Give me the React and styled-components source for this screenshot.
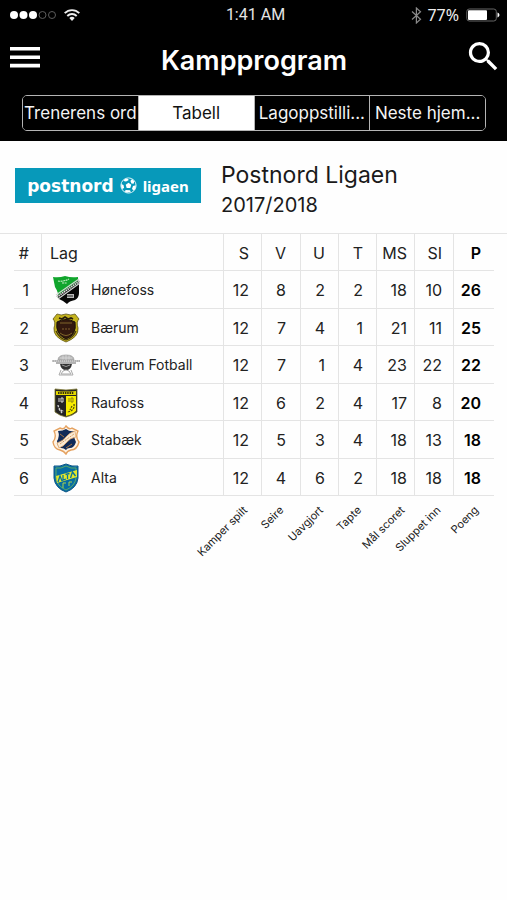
import React from "react";
import styled, { createGlobalStyle, css } from "styled-components";
import { MdSearch } from "react-icons/md";

const GlobalStyle = createGlobalStyle`
  * { box-sizing: border-box; }
  body {
    margin: 0;
    background: #fefefe;
    color: #1a1a1a;
    font-family: Inter, "Liberation Sans", sans-serif;
  }
`;

const Header = styled.header`
  background: #000;
  color: #fff;
  padding-bottom: 10px;
`;

const StatusBar = styled.div`
  display: grid;
  grid-template-columns: 1fr auto 1fr;
  align-items: center;
  height: 30px;
  padding: 0 6px 0 10px;
`;

const StatusGroup = styled.div`
  display: flex;
  align-items: center;
  gap: ${(p) => p.$gap}px;
  justify-content: ${(p) => (p.$end ? "flex-end" : "flex-start")};
`;

const Clock = styled.time`
  font: 400 16px/20px Roboto, sans-serif;
  color: #e4e4e4;
`;

const BatteryText = styled.span`
  font: 400 16px/20px "Noto Sans", sans-serif;
  color: #eee;
  margin-right: 2px;
`;

const NavBar = styled.div`
  display: grid;
  grid-template-columns: 44px 1fr 44px;
  height: 65px;
  padding: 0 2px 0 3px;
`;

const IconButton = styled.button`
  display: flex;
  justify-content: center;
  align-items: flex-start;
  padding: ${(p) => p.$top}px 0 0;
  border: 0;
  background: none;
  color: #fff;
`;

const Title = styled.h1`
  margin: 0;
  padding-top: 14px;
  text-align: center;
  font-size: 27px;
  line-height: 34px;
  font-weight: 600;
`;

const Segments = styled.nav`
  display: flex;
  height: 36px;
  margin: 0 21px 0 22px;
  border: 1px solid #b4b4b4;
  border-radius: 5px;
  overflow: hidden;
`;

const Segment = styled.button`
  flex: 1 1 0;
  min-width: 0;
  padding: 0;
  border: 0;
  overflow: hidden;
  white-space: nowrap;
  font: 400 17px/34px Inter, sans-serif;
  background: ${(p) => (p.$active ? "#fff" : "#000")};
  color: ${(p) => (p.$active ? "#111" : "#f4f4f4")};
  & + & { border-left: 1px solid #b4b4b4; }
`;

const League = styled.section`
  display: flex;
  align-items: flex-start;
  gap: 20px;
  height: 92px;
  padding: 19px 15px 0;
`;

const Banner = styled.div`
  display: flex;
  align-items: center;
  justify-content: center;
  gap: 6px;
  width: 186px;
  height: 35px;
  margin-top: 8px;
  background: #0799ba;
  color: #fff;
`;

const BrandName = styled.span`
  font: 700 17px/20px "DejaVu Sans", sans-serif;
`;

const BrandLeague = styled.span`
  font: 700 15px/20px "Noto Sans", sans-serif;
`;

const LeagueName = styled.h2`
  margin: 0;
  font-size: 23px;
  line-height: 30px;
  font-weight: 400;
`;

const Season = styled.p`
  margin: 0;
  font-size: 20px;
  line-height: 30px;
`;

const TableFrame = styled.main`
  border-top: 1px solid #e4e4e4;
  padding: 0 13px 0 14px;
`;

const Table = styled.table`
  width: 100%;
  table-layout: fixed;
  border-collapse: separate;
  border-spacing: 0;
  font-size: 16px;
  line-height: 20px;
`;

const Col = styled.col`
  width: ${(p) => (p.$w ? `${p.$w}px` : "auto")};
`;

const cell = css`
  padding: 1px ${(p) => p.$pad ?? 14}px 0 0;
  text-align: right;
  font-weight: ${(p) => (p.$bold ? 600 : 400)};
  color: ${(p) => (p.$bold ? "#000" : "#222")};
  border-bottom: 1px solid #e4e4e4;
  border-right: ${(p) => (p.$last ? "0" : "1px solid #e4e4e4")};
`;

const Row = styled.tr`
  height: 37px;
  &:nth-child(odd) { height: ${(p) => (p.$head ? 37 : 38)}px; }
`;

const HeadCell = styled.th`
  ${cell}
`;

const NumberCell = styled.td`
  ${cell}
`;

const TeamHeadCell = styled.th`
  ${cell}
  padding: 1px 8px 0;
  text-align: left;
`;

const TeamCell = styled.td`
  ${cell}
  padding: 1px 0 0 10px;
`;

const Team = styled.div`
  display: flex;
  align-items: center;
  gap: 11px;
  font-size: 14px;
`;

const LegendCell = styled.td`
  padding: 0 ${(p) => p.$pad}px 0 0;
  height: 70px;
  vertical-align: top;
`;

const LegendLabel = styled.div`
  display: flex;
  justify-content: flex-end;
  padding: 5px 5px 0 0;
`;

const Slanted = styled.span`
  flex: none;
  white-space: nowrap;
  font-size: 11px;
  line-height: 14px;
  transform: rotate(-45deg);
  transform-origin: 100% 50%;
`;

const SignalIcon = () => (
  <svg width="46" height="10" viewBox="0 0 46 10" aria-hidden="true">
    {[4, 13.5, 23].map((x) => <circle key={x} cx={x} cy="5" r="4" fill="#fff" />)}
    {[32.5, 42].map((x) => <circle key={x} cx={x} cy="5" r="3.5" fill="none" stroke="#5c5c5c" />)}
  </svg>
);

const WifiIcon = () => (
  <svg width="16" height="12" viewBox="0 0 16 12" fill="none" stroke="#eee" strokeWidth="1.9" aria-hidden="true">
    <path d="M.7 4.2C4.8.1 11.2.1 15.3 4.2" />
    <path d="M3.3 7C6 4.4 10 4.4 12.7 7" />
    <path d="M8 12 5.3 9.1a4 4 0 0 1 5.4 0z" fill="#eee" stroke="none" />
  </svg>
);

const BluetoothIcon = () => (
  <svg width="11" height="17" viewBox="0 0 11 17" fill="none" stroke="#8a8a8a" strokeWidth="1.2" aria-hidden="true">
    <path d="M1 4.5 9.5 12.3 5.4 16V1l4.1 3.7L1 12.5" />
  </svg>
);

const BatteryIcon = () => (
  <svg width="35" height="14" viewBox="0 0 35 14" aria-hidden="true">
    <rect x=".8" y="1" width="29.5" height="12" rx="2.5" fill="none" stroke="#666" />
    <rect x="2" y="2.2" width="19" height="9.8" rx="1" fill="#fff" />
    <path d="M31.5 4.6c2.6.8 2.6 4 0 4.8z" fill="#fff" />
  </svg>
);

const MenuIcon = () => (
  <svg width="30" height="21" viewBox="0 0 30 21" fill="#fff" aria-hidden="true">
    <path d="M0 0h30v3.6H0zM0 8.4h30V12H0zM0 16.8h30v3.6H0z" />
  </svg>
);

const BallIcon = () => (
  <svg width="17" height="17" viewBox="0 0 17 17" aria-hidden="true">
    <circle cx="8.5" cy="8.5" r="7.6" fill="#0799ba" stroke="#d8f2f7" strokeWidth="1" />
    <path d="m8.5 5.8 2.8 2-1 3.3H6.7l-1-3.3zM5 1.8l3.3.1.2 1.4L6 4.6 3.6 4zM12 2l2.4 2.6-.8 2.2-2.2-.4-1-2.4zM1.2 7l2.3 1 .6 3-2 1A8 8 0 0 1 1.2 7zM15.9 8.2l-.6 4-2 1.3-1.3-1.7 1-2.9zM5.5 13l4.5.2.8 1.5A8 8 0 0 1 5 15z" fill="#fff" />
  </svg>
);

const Crest = ({ children, label }) => (
  <svg width="28" height="30" viewBox="0 0 28 30" role="img" aria-label={label}>{children}</svg>
);

const HonefossCrest = () => (
  <Crest label="Hønefoss">
    <path d="M1 2Q7 3 13 1q6 2 13 1v9L6 23Q7 18 3 12z" fill="#10a52c" />
    <path d="M27 8v10q0 5-4 7-6 1-8 4-3-3-8-5l-1-3z" fill="#080808" />
    <path d="m4 20 23-16M6 24 28 8" stroke="#d5d5d5" strokeWidth="1.1" />
    <path d="M5 22 27.5 6" stroke="#555" strokeWidth="2" />
    <path d="M5 22 27.5 6" stroke="#eee" strokeWidth="1.8" strokeDasharray="1 1.2" />
    <path d="M6 6q5 1 11-2M10 8h5" stroke="#c5f0c5" strokeWidth="1.1" fill="none" strokeDasharray="2 .6" />
    <path d="M15 19h7v4h-7z" fill="#bbb" /><path d="M16 20v2m2-2v2m2-2v2" stroke="#222" />
  </Crest>
);

const BaerumCrest = () => (
  <Crest label="Bærum">
    <path d="M5 1q4 2 9 0 5 2 9 0l4 5q-3 3-1 9 1 9-12 14Q1 24 2 15 4 9 1 6z" fill="#c4b31d" stroke="#5e5417" strokeWidth=".8" />
    <path d="M5 9q9-5 18 0 2 13-9 17Q3 21 5 9z" fill="#33190e" stroke="#17100b" />
    <path d="m7 5 3 1 3-2 3 2 3-1 2 1" fill="none" stroke="#251b0b" strokeWidth="1.8" />
    <path d="M8 10h12M8 20q6 5 12 0" fill="none" stroke="#80662a" />
    <path d="M10 16h8" stroke="#80612f" strokeDasharray="2 1" />
    <path d="M4 18q4 8 10 9 7-2 10-9" fill="none" stroke="#3e3012" strokeWidth="1.2" />
  </Crest>
);

const ElverumCrest = () => (
  <Crest label="Elverum Fotball">
    <path d="M6 10q0-5 8-5t8 5z" fill="#b8b8b8" stroke="#999" strokeWidth=".7" />
    <path d="M8 8h12M11 5.5v4M14 5v5M17 5.5v4" stroke="#ddd" strokeWidth=".7" />
    <path d="M0 11h28M4 13h20" stroke="#999" strokeWidth="1.5" />
    <path d="M0 11h28" stroke="#ddd" strokeDasharray="1 1" />
    <path d="M8 14h12q-1 6-6 6t-6-6z" fill="#333" />
    <path d="M10 15q4 3 8 0" stroke="#999" fill="none" />
    <path d="m9 20-2 5h14l-2-5m-8 1q3-2 6 0l2 3H9z" fill="none" stroke="#aaa" />
  </Crest>
);

const RaufossCrest = () => (
  <Crest label="Raufoss">
    <path d="M3 1q11 2 22 0v23q-5 4-11 5-6-1-11-5z" fill="#242424" stroke="#77712b" strokeWidth=".8" />
    <path d="M14 8h10v15q-4 4-10 5z" fill="#f8ed00" />
    <path d="M4 3q10 1 20 0v4H4z" fill="#e5d900" />
    <path d="M6 5h16" stroke="#37330d" strokeWidth="2" strokeDasharray="1.5 .8" />
    <path d="M7 10v4m2-4h2v4H9z" stroke="#ddd" fill="none" />
    <path d="M17 10v4m2-4h2v4h-2z" stroke="#8b8212" fill="none" />
    <path d="M6 17q1 6 6 6M7 21l3 4" stroke="#d4d4d4" strokeWidth="1.3" fill="none" strokeDasharray="2 1" />
    <path d="M22 16q1 7-7 8M20 18l-2 4" stroke="#55500c" strokeWidth="1.3" fill="none" strokeDasharray="2 1" />
  </Crest>
);

const StabaekCrest = () => (
  <Crest label="Stabæk">
    <path d="M14 1q3 4 6 2l6 3q-3 6 1 11-2 8-8 8-4 1-5 4-2-3-6-4-6-1-7-8 4-5 1-11l6-3q4 2 6-2z" fill="#fff2e2" stroke="#e5a260" strokeWidth="1.4" />
    <path d="M14 4q4 3 8 2-1 5 2 11-2 6-6 6-3 0-4 2-2-2-5-2-4-1-4-7 3-5 1-10 5 0 8-2z" fill="#102a58" />
    <path d="M5 18q6-2 9-6t9-6l1 6q-6 1-9 5t-8 6z" fill="#f9ead5" stroke="#e4a869" strokeWidth=".8" />
    <path d="m8 19 14-10" stroke="#d79d64" strokeDasharray="2 1" />
    <path d="m14 23 6-4M8 9l4 3" stroke="#a97543" />
  </Crest>
);

const AltaCrest = () => (
  <Crest label="Alta">
    <path d="M2 3q6 1 12-2 6 3 12 2v12q-1 10-12 14Q3 25 2 15z" fill="#076da2" stroke="#0b5687" />
    <path d="M4 5q5 1 10-2 5 3 10 2v10q-1 8-10 12Q5 23 4 15z" fill="none" stroke="#62af62" strokeWidth=".9" />
    <path d="m4 13 21-6v7L5 20z" fill="#e2e82c" />
    <path d="m6 19 2-6 2 5M11 12v5l3-1M13.500 11.500l4-1m-2 .500v5m3-1 2-6 3 4" fill="none" stroke="#08749b" strokeWidth="1.300" />
    <path d="M11 20v5m0-5h3M17 19v4m0-4h3" stroke="#acd44d" fill="none" />
  </Crest>
);

const stats = [
  { key: "S", label: "Kamper spilt", width: 38, pad: 12 },
  { key: "V", label: "Seire", width: 39, pad: 14 },
  { key: "U", label: "Uavgjort", width: 38, pad: 13 },
  { key: "T", label: "Tapte", width: 38, pad: 13 },
  { key: "MS", label: "Mål scoret", width: 38, pad: 7 },
  { key: "SI", label: "Sluppet inn", width: 39, pad: 11 },
  { key: "P", label: "Poeng", width: 40, pad: 13, bold: true },
];

const teams = [
  { name: "Hønefoss", Icon: HonefossCrest, values: [12, 8, 2, 2, 18, 10, 26] },
  { name: "Bærum", Icon: BaerumCrest, values: [12, 7, 4, 1, 21, 11, 25] },
  { name: "Elverum Fotball", Icon: ElverumCrest, values: [12, 7, 1, 4, 23, 22, 22] },
  { name: "Raufoss", Icon: RaufossCrest, values: [12, 6, 2, 4, 17, 8, 20] },
  { name: "Stabæk", Icon: StabaekCrest, values: [12, 5, 3, 4, 18, 13, 18] },
  { name: "Alta", Icon: AltaCrest, values: [12, 4, 6, 2, 18, 18, 18] },
];

const tabs = ["Trenerens ord", "Tabell", "Lagoppstilli...", "Neste hjem..."];

export default function App() {
  return (
    <>
      <GlobalStyle />
      <Header>
        <StatusBar>
          <StatusGroup $gap={8}><SignalIcon /><WifiIcon /></StatusGroup>
          <Clock>1:41 AM</Clock>
          <StatusGroup $gap={5} $end>
            <BluetoothIcon /><BatteryText>77%</BatteryText><BatteryIcon />
          </StatusGroup>
        </StatusBar>
        <NavBar>
          <IconButton type="button" aria-label="Meny" $top={17}><MenuIcon /></IconButton>
          <Title>Kampprogram</Title>
          <IconButton type="button" aria-label="Søk" $top={7}><MdSearch size={39} /></IconButton>
        </NavBar>
        <Segments>
          {tabs.map((tab) => (
            <Segment key={tab} type="button" $active={tab === "Tabell"} aria-pressed={tab === "Tabell"}>{tab}</Segment>
          ))}
        </Segments>
      </Header>
      <League>
        <Banner>
          <BrandName>postnord</BrandName><BallIcon /><BrandLeague>ligaen</BrandLeague>
        </Banner>
        <div>
          <LeagueName>Postnord Ligaen</LeagueName>
          <Season>2017/2018</Season>
        </div>
      </League>
      <TableFrame>
        <Table>
          <colgroup>
            <Col $w={28} />
            <Col />
            {stats.map((s) => <Col key={s.key} $w={s.width} />)}
          </colgroup>
          <thead>
            <Row $head>
              <HeadCell scope="col" $pad={12}>#</HeadCell>
              <TeamHeadCell scope="col">Lag</TeamHeadCell>
              {stats.map((s) => (
                <HeadCell key={s.key} scope="col" $pad={s.pad} $bold={s.bold} $last={s.bold}>{s.key}</HeadCell>
              ))}
            </Row>
          </thead>
          <tbody>
            {teams.map(({ name, Icon, values }, i) => (
              <Row key={name}>
                <NumberCell $pad={12}>{i + 1}</NumberCell>
                <TeamCell><Team><Icon />{name}</Team></TeamCell>
                {stats.map((s, j) => (
                  <NumberCell key={s.key} $pad={s.pad} $bold={s.bold} $last={s.bold}>{values[j]}</NumberCell>
                ))}
              </Row>
            ))}
          </tbody>
          <tfoot>
            <tr>
              <td colSpan={2} />
              {stats.map((s) => (
                <LegendCell key={s.key} $pad={s.pad}>
                  <LegendLabel><Slanted>{s.label}</Slanted></LegendLabel>
                </LegendCell>
              ))}
            </tr>
          </tfoot>
        </Table>
      </TableFrame>
    </>
  );
}
